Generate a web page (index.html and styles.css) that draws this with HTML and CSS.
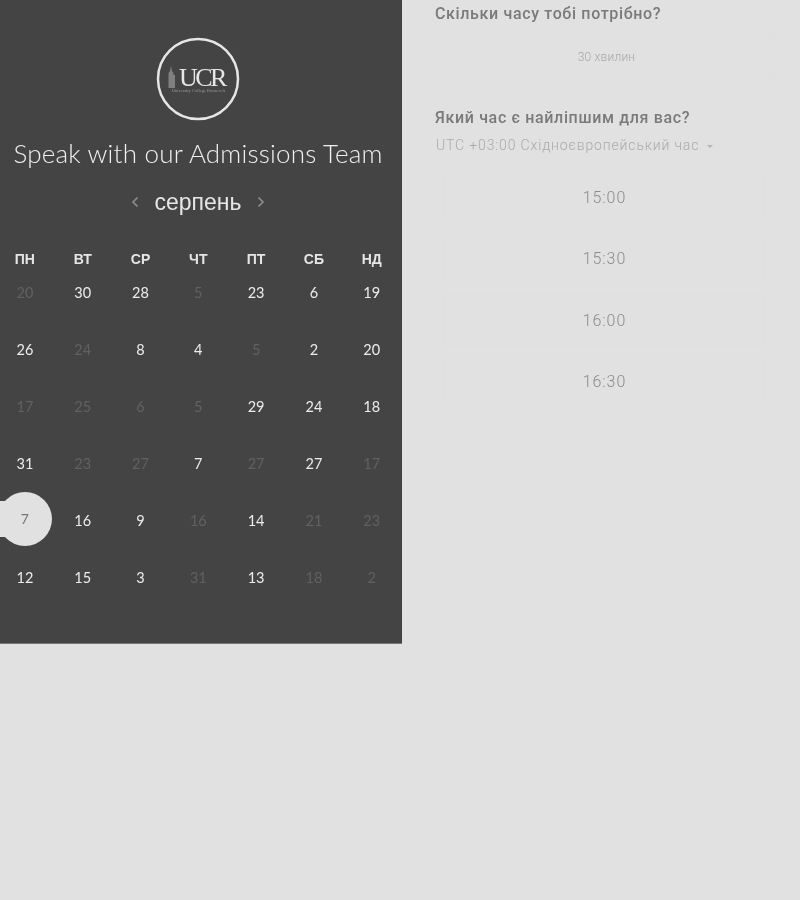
FILE: index.html
```html
<!doctype html>
<html lang="uk">
<head>
    <meta charset="UTF-8">
    <title>Speak with our Admissions Team</title>
    <link rel="stylesheet" href="styles.css">
</head>
<body>
<div class="wrap">
    <section class="side">
        <svg class="logo" width="86" height="86" viewBox="0 0 86 86">
            <circle cx="43" cy="43" r="40" fill="none" stroke="#e6e6e6" stroke-width="2.500"/>
            <path d="M13.500 52V37l1.500-2 1-5 1 5 1.500 2v2h1.500v13z" fill="#808080"/>
            <text x="24" y="50" class="logo-ucr">UCR</text>
            <text x="43.500" y="56" text-anchor="middle" class="logo-small">University College Roosevelt</text>
        </svg>
        <h1 class="title">Speak with our Admissions Team</h1>
        <div class="month">
            <svg width="8" height="12" viewBox="0 0 8 12"><path d="M6.500 1.500 2 6l4.500 4.500" fill="none" stroke="#8c8c8c" stroke-width="1.700"/></svg>
            <span class="month-name">серпень</span>
            <svg width="8" height="12" viewBox="0 0 8 12"><path d="M1.500 1.500 6 6l-4.500 4.500" fill="none" stroke="#8c8c8c" stroke-width="1.700"/></svg>
        </div>
        <div class="days">
            <b>ПН</b><b>ВТ</b><b>СР</b><b>ЧТ</b><b>ПТ</b><b>СБ</b><b>НД</b>
            <span class="off">20</span><span>30</span><span>28</span><span class="off">5</span><span>23</span><span>6</span><span>19</span>
            <span>26</span><span class="off">24</span><span>8</span><span>4</span><span class="off">5</span><span>2</span><span>20</span>
            <span class="off">17</span><span class="off">25</span><span class="off">6</span><span class="off">5</span><span>29</span><span>24</span><span>18</span>
            <span>31</span><span class="off">23</span><span class="off">27</span><span>7</span><span class="off">27</span><span>27</span><span class="off">17</span>
            <span class="picked"><i>7</i></span><span>16</span><span>9</span><span class="off">16</span><span>14</span><span class="off">21</span><span class="off">23</span>
            <span>12</span><span>15</span><span>3</span><span class="off">31</span><span>13</span><span class="off">18</span><span class="off">2</span>
        </div>
    </section>
    <section class="main">
        <h2 class="ask">Скільки часу тобі потрібно?</h2>
        <div class="length">30 хвилин</div>
        <h2 class="ask ask-time">Який час є найліпшим для вас?</h2>
        <div class="zone">UTC +03:00 Східноєвропейський час <span class="caret"></span></div>
        <div class="slots">
            <div class="slot">15:00</div>
            <div class="slot">15:30</div>
            <div class="slot">16:00</div>
            <div class="slot">16:30</div>
        </div>
    </section>
</div>
</body>
</html>
```
FILE: styles.css
```css
* {
    padding: 0;
    margin: 0;
    box-sizing: border-box;
}

html, body {
    height: 900px;
    overflow: hidden;
    background: #e1e1e1;
}

.wrap {
    display: flex;
    align-items: flex-start;
    width: 800px;
    filter: grayscale(1) blur(.35px);
}

.side {
    width: 402px;
    height: 644px;
    flex: none;
    padding: 36px 6px 0 0;
    background: #444;
    border-bottom: 1px solid #777;
    display: flex;
    flex-direction: column;
    align-items: center;
}

.logo {
    display: block;
}

.logo-ucr {
    font-family: "Liberation Serif", serif;
    font-size: 26px;
    letter-spacing: -2.500px;
    fill: #e6e6e6;
}

.logo-small {
    font-family: "Liberation Serif", serif;
    font-size: 4.500px;
    fill: #9a9a9a;
}

.title {
    margin-top: 14px;
    font-family: Lato, sans-serif;
    font-size: 26px;
    line-height: 34px;
    font-weight: 300;
    letter-spacing: .2px;
    white-space: nowrap;
    color: #efefef;
}

.month {
    margin-top: 15px;
    display: flex;
    align-items: center;
    gap: 15px;
    height: 34px;
}

.month-name {
    font-family: "Liberation Sans", sans-serif;
    font-size: 23px;
    color: #e6e6e6;
}

.days {
    margin: 24px 0 0 -4px;
    align-self: flex-start;
    width: 404.600px;
    display: grid;
    grid-template-columns: repeat(7, 57.800px);
    grid-template-rows: 41px repeat(6, 57px);
    text-align: center;
    font-family: Lato, sans-serif;
    font-size: 14.500px;
    color: #ececec;
}

.days b {
    line-height: 32px;
    font-family: "Liberation Sans", sans-serif;
    font-size: 14px;
    color: #e6e6e6;
}

.days span {
    line-height: 18px;
    height: 18px;
}

.days .off {
    color: #616161;
}

.picked {
    position: relative;
}

.picked::before {
    content: "";
    position: absolute;
    left: 4px;
    top: -11px;
    width: 20px;
    height: 36px;
    background: #e1e1e1;
}

.picked::after {
    content: "";
    position: absolute;
    left: 2px;
    top: -20px;
    width: 54px;
    height: 54px;
    border-radius: 50%;
    background: #e1e1e1;
}

.picked i {
    position: relative;
    z-index: 1;
    top: -2px;
    font-style: normal;
    font-size: 14px;
    color: #777;
}

.main {
    flex: 1;
    padding: 3px 25px 0 33px;
    height: 652px;
    border-bottom: 1px solid #dfdfdf;
}

.ask {
    font-family: Roboto, sans-serif;
    font-size: 16px;
    line-height: 22px;
    font-weight: 500;
    letter-spacing: .65px;
    color: #7a7a7a;
}

.length {
    margin: 9px 0 0 3px;
    height: 44px;
    line-height: 44px;
    text-align: center;
    font-family: Roboto, sans-serif;
    font-size: 12px;
    font-weight: 300;
    letter-spacing: .2px;
    color: #a8a8a8;
    border: 1px solid #dfdfdf;
    border-radius: 2px;
}

.ask-time {
    margin-top: 29px;
}

.zone {
    margin: 6px 0 0 1px;
    line-height: 20px;
    font-family: Roboto, sans-serif;
    font-size: 14px;
    font-weight: 300;
    letter-spacing: .85px;
    white-space: nowrap;
    color: #aaa;
}

.caret {
    display: inline-block;
    margin-left: 3px;
    vertical-align: middle;
    border: 3px solid transparent;
    border-top-color: #b5b5b5;
    border-bottom: 0;
}

.slots {
    margin: 17px 0 0 9px;
    width: 321px;
    display: flex;
    flex-direction: column;
    gap: 11.300px;
}

.slot {
    height: 50px;
    line-height: 50px;
    text-align: center;
    font-family: Roboto, sans-serif;
    font-size: 16px;
    font-weight: 300;
    letter-spacing: .9px;
    color: #8c8c8c;
    border: 1px solid #dfdfdf;
    border-radius: 2px;
}
```
